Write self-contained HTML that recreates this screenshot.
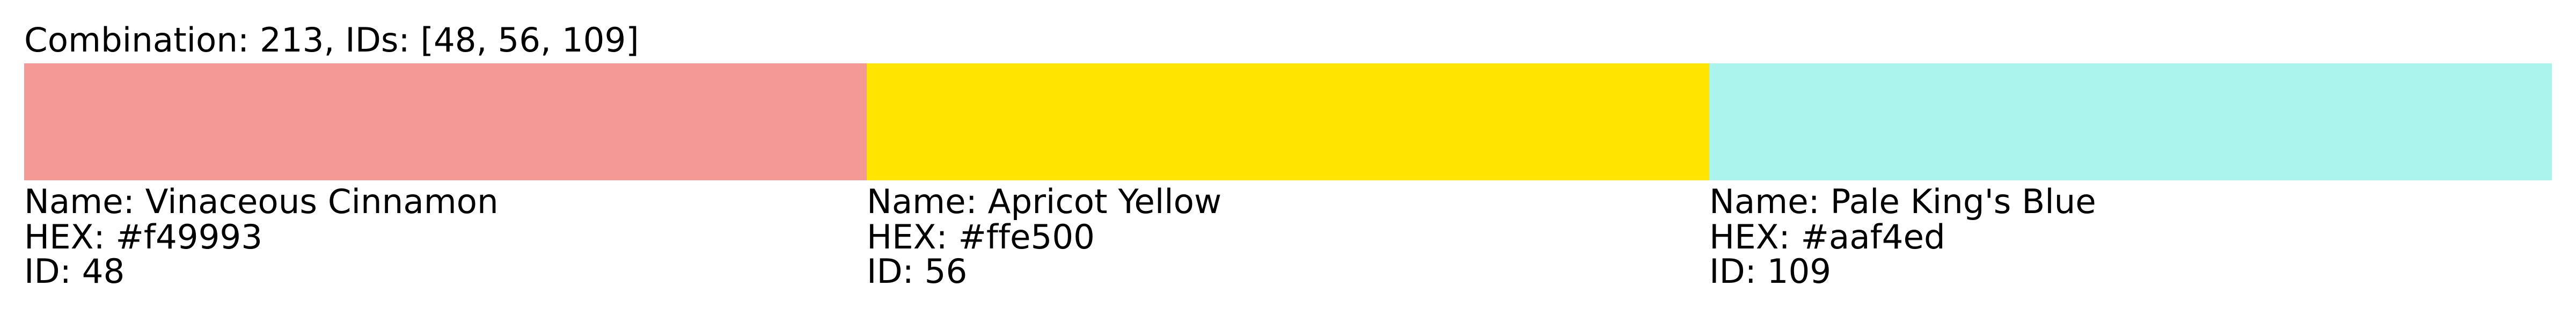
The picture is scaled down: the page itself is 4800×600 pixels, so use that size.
<!DOCTYPE html>
<html><head><style>
body{margin:0;width:4800px;height:600px;background:#fff;position:relative;overflow:hidden;font-family:"DejaVu Sans","Liberation Sans",sans-serif;font-size:62.6px;color:#000;font-variant-ligatures:none;font-feature-settings:"liga" 0,"clig" 0}
.b{position:absolute;top:118px;height:218px;width:1570px}
.t{position:absolute;line-height:normal;white-space:nowrap}
</style></head><body>
<div class="t" style="left:45px;top:38px">Combination: 213, IDs: [48, 56, 109]</div>
<div class="b" style="left:45px;background:#f49993"></div>
<div class="b" style="left:1615px;background:#ffe500"></div>
<div class="b" style="left:3185px;background:#aaf4ed"></div>
<div class="t" style="left:45px;top:339px">Name: Vinaceous Cinnamon</div>
<div class="t" style="left:45px;top:405px">HEX: #f49993</div>
<div class="t" style="left:45px;top:469px">ID: 48</div>
<div class="t" style="left:1615px;top:339px">Name: Apricot Yellow</div>
<div class="t" style="left:1615px;top:405px">HEX: #ffe500</div>
<div class="t" style="left:1615px;top:469px">ID: 56</div>
<div class="t" style="left:3185px;top:339px">Name: Pale King's Blue</div>
<div class="t" style="left:3185px;top:405px">HEX: #aaf4ed</div>
<div class="t" style="left:3185px;top:469px">ID: 109</div>
</body></html>
